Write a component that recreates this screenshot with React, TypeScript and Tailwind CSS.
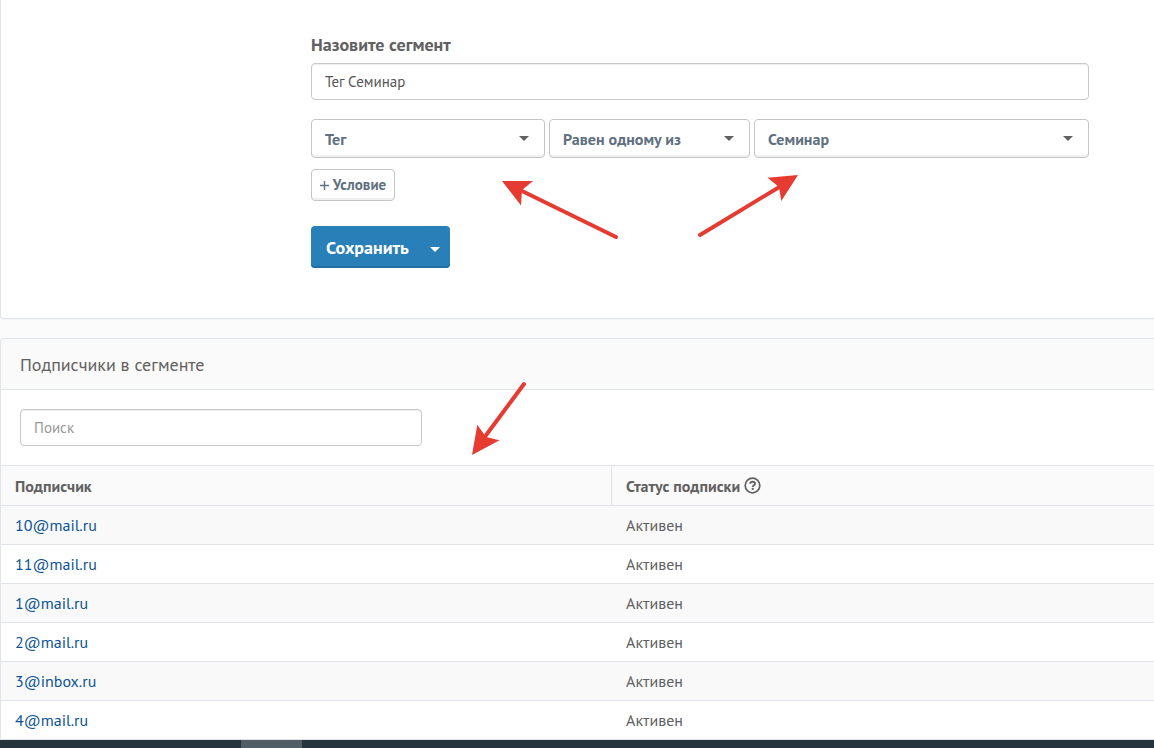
import React from 'react'

const subscribers = [
  '10@mail.ru',
  '11@mail.ru',
  '1@mail.ru',
  '2@mail.ru',
  '3@inbox.ru',
  '4@mail.ru',
]

function Caret({ className }: { className: string }): React.JSX.Element {
  return (
    <svg
      className={className}
      width="10"
      height="5"
      viewBox="0 0 10 5"
      fill="currentColor"
    >
      <path d="M0 0h10L5 5z" />
    </svg>
  )
}

function Dropdown({
  label,
  value,
}: {
  label: string
  value: string
}): React.JSX.Element {
  return (
    <div className="relative">
      <select
        aria-label={label}
        className="block w-full h-[39px] appearance-none rounded border border-[#c3c6c9] bg-white pl-[13px] pr-8 text-[16px] font-bold text-[#617080] shadow-[inset_0_-2px_0_#f0f0f0]"
      >
        <option>{value}</option>
      </select>
      <Caret className="absolute right-4 top-[17px] text-[#606060] pointer-events-none" />
    </div>
  )
}

function SegmentForm(): React.JSX.Element {
  return (
    <form className="rounded-bl border-l border-b border-[#e0e5eb] bg-white pl-[310px] pr-[65px] pt-8 pb-[50px] shadow-[0_1px_1px_#f2f2f2]">
      <label
        htmlFor="segment"
        className="block h-[31px] text-[18px] leading-[26px] font-bold text-[#616161]"
      >
        Назовите сегмент
      </label>
      <input
        id="segment"
        type="text"
        defaultValue="Тег Семинар"
        className="block w-full h-[37px] rounded border border-[#c8c8c8] bg-white px-[13px] text-[15px] text-[#555] shadow-[inset_0_1px_1px_#eee]"
      />
      <div className="mt-[19px] grid grid-cols-[234fr_201fr_335fr] gap-1">
        <Dropdown label="Поле" value="Тег" />
        <Dropdown label="Условие" value="Равен одному из" />
        <Dropdown label="Значение" value="Семинар" />
      </div>
      <button
        type="button"
        className="mt-[11px] flex h-8 w-[84px] items-center justify-center gap-1 rounded border border-[#c3c6c9] bg-white text-[15px] font-bold text-[#617080] shadow-[inset_0_-2px_0_#f0f0f0]"
      >
        <svg
          width="9"
          height="9"
          viewBox="0 0 9 9"
          stroke="currentColor"
          strokeWidth="1.4"
        >
          <path d="M0 4.5h9M4.5 0v9" />
        </svg>
        Условие
      </button>
      <div className="mt-[25px] flex h-[42px] w-[139px] overflow-hidden rounded bg-[#2980b9] text-white shadow-[inset_0_-2px_0_#2270a3]">
        <button type="button" className="pl-[15px] text-[18px] font-bold">
          Сохранить
        </button>
        <button
          type="button"
          aria-label="Ещё"
          className="flex grow items-center justify-end pr-[10px] pt-1"
        >
          <Caret className="text-white" />
        </button>
      </div>
    </form>
  )
}

function Subscribers(): React.JSX.Element {
  return (
    <section className="mt-[19px] rounded-tl border-l border-t border-[#e0e5eb] bg-white">
      <h2 className="flex h-[51px] items-center rounded-tl border-b border-[#e0e5eb] bg-[#fafafa] pl-[19px] text-[18px] text-[#616161]">
        Подписчики в сегменте
      </h2>
      <div className="px-[19px] pt-[19px] pb-[19px]">
        <input
          type="search"
          aria-label="Поиск"
          placeholder="Поиск"
          className="block w-[402px] h-[37px] rounded border border-[#c8c8c8] bg-white px-[13px] text-[15px] shadow-[inset_0_1px_1px_#eee] placeholder:text-[#999]"
        />
      </div>
      <table className="w-full table-fixed border-separate border-spacing-0 text-left text-[16px] text-[#616161]">
        <thead>
          <tr className="h-[41px] bg-[#fafafa]">
            <th className="w-[53%] border-y border-r border-[#e0e3e9] py-0 pl-[14px]">
              Подписчик
            </th>
            <th className="border-y border-[#e0e3e9] py-0 pl-[14px]">
              <span className="flex items-center gap-1">
                Статус подписки
                <svg
                  width="17"
                  height="17"
                  viewBox="0 0 17 17"
                  fill="none"
                  stroke="currentColor"
                >
                  <circle cx="8.5" cy="8.5" r="7.3" strokeWidth="1.7" />
                  <path
                    d="M6.100 6.800c.2-2.700 4.900-2.700 4.900 0 0 1.400-2.300 1.500-2.300 3.200"
                    strokeWidth="1.9"
                  />
                  <path d="M8.700 10.900v2" strokeWidth="2" />
                </svg>
              </span>
            </th>
          </tr>
        </thead>
        <tbody>
          {subscribers.map((email) => (
            <tr key={email} className="h-[39px] odd:bg-[#f9f9f9]">
              <td className="border-b border-[#e0e3e9] py-0 pl-[14px]">
                <a href="#" className="text-[#0b5394]">
                  {email}
                </a>
              </td>
              <td className="border-b border-[#e0e3e9] py-0 pl-[14px]">
                Активен
              </td>
            </tr>
          ))}
        </tbody>
      </table>
    </section>
  )
}

function Arrows(): React.JSX.Element {
  return (
    <svg
      className="absolute left-0 top-0 pointer-events-none text-[#e53b30]"
      width="820"
      height="470"
      fill="currentColor"
    >
      <g stroke="currentColor" strokeWidth="4" strokeLinecap="round">
        <path d="M520 190L616 237" />
        <path d="M781 186L700 235" />
        <path d="M484 438L524 384" />
      </g>
      <path d="M502 181H533L522 190L521 205.500z" />
      <path d="M798 175L767.500 177.700L779 187L781.300 201z" />
      <path d="M472 455L477.300 424.700L486 437L499.500 440.300z" />
    </svg>
  )
}

function App(): React.JSX.Element {
  return (
    <div className="relative bg-[#fbfbfb] font-['PT_Sans','Noto_Sans',sans-serif]">
      <SegmentForm />
      <Subscribers />
      <footer className="flex h-2 bg-[#26343d]">
        <div className="ml-[241px] w-[61px] bg-[#525e66]" />
      </footer>
      <Arrows />
    </div>
  )
}

export default App
